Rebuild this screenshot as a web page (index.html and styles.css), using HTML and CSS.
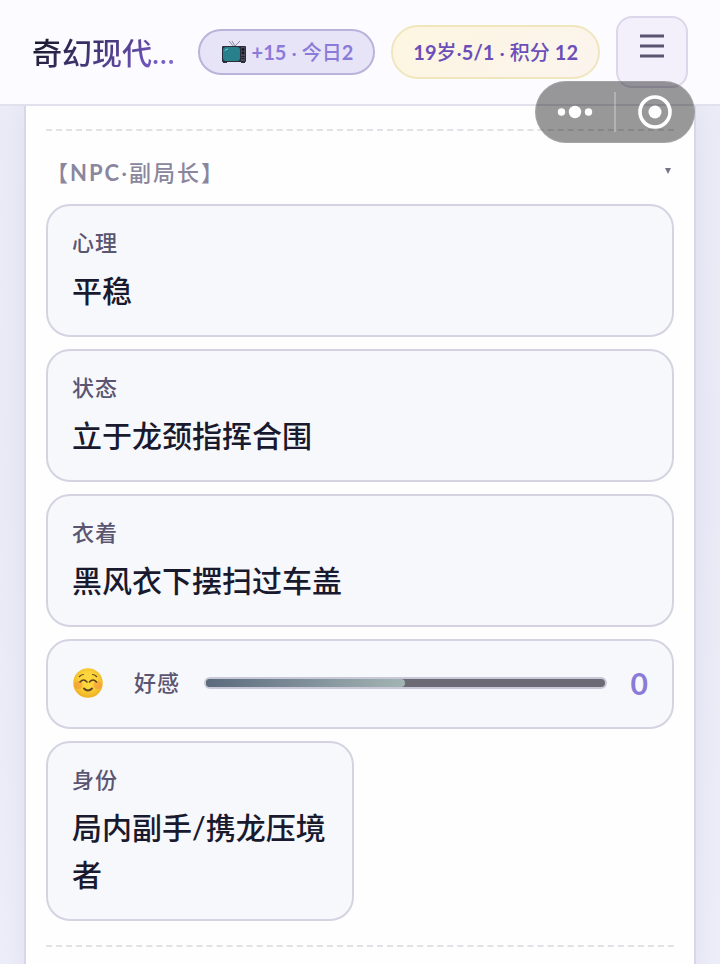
FILE: index.html
```html
<!DOCTYPE html>
<html lang="zh-CN">
<head>
  <meta charset="UTF-8" />
  <meta name="viewport" content="width=device-width, initial-scale=1.0"/>
  <title>奇幻现代</title>
  <link rel="stylesheet" href="styles.css">
</head>
<body>

  <header class="topbar">
    <h1 class="topbar-title">奇幻现代…</h1>
    <button class="pill pill-ad" type="button">
      <svg class="tv" viewBox="0 0 26 24" aria-hidden="true">
        <path d="M8 1l5 6 6-6M11 1l3 5" fill="none" stroke="#8d8a9c" stroke-width="1"/>
        <path d="M2 22h4v1H2zM20 22h4v1h-4z" fill="#302c3c"/>
        <rect x="1" y="6" width="24" height="16" rx="1" fill="#292d3a"/>
        <rect x="2" y="7" width="17" height="14" rx="3" fill="#28808c"/>
        <path d="M4 11q0-2 3-2" fill="none" stroke="#7fc3c9" stroke-width="1"/>
        <rect x="20" y="7" width="4" height="14" fill="#4b4b58"/>
        <circle cx="22" cy="9.500" r="1.400" fill="#171923"/>
        <circle cx="22" cy="13" r="1.400" fill="#171923"/>
        <path d="M20.500 16.500h3M20.500 18.500h3" stroke="#1c1f2a"/>
      </svg>
      <span><b>+15</b> · 今日<b>2</b></span>
    </button>
    <div class="pill pill-score"><span><b>19</b>岁·<b>5/1</b> · 积分 <b>12</b></span></div>
    <button class="menu-btn" type="button" aria-label="菜单">
      <svg viewBox="0 0 24 24" aria-hidden="true">
        <path d="M0 2h24M0 12h24M0 22h24" stroke="#5a5470" stroke-width="2.800"/>
      </svg>
    </button>
  </header>

  <div class="capsule">
    <button type="button" aria-label="更多">
      <svg width="36" height="14" viewBox="0 0 36 14" fill="#fff" aria-hidden="true">
        <circle cx="4.500" cy="7" r="3.700"/>
        <circle cx="18" cy="7" r="6.200"/>
        <circle cx="31.500" cy="7" r="3.700"/>
      </svg>
    </button>
    <span class="capsule-line"></span>
    <button type="button" aria-label="关闭">
      <svg width="34" height="34" viewBox="0 0 34 34" aria-hidden="true">
        <circle cx="17" cy="17" r="15" fill="none" stroke="#fff" stroke-width="3.600"/>
        <circle cx="17" cy="17" r="6.500" fill="#fff"/>
      </svg>
    </button>
  </div>

  <main class="panel">
    <section class="group">
      <h2 class="group-heading">
        <button class="group-toggle" type="button" aria-expanded="true">
          <span>【<b>NPC</b>·副局长】</span>
          <svg class="arrow" viewBox="0 0 6 6" aria-hidden="true"><path d="M0 0h6L3 6z" fill="#77738a"/></svg>
        </button>
      </h2>

      <div class="cards">
        <div class="card wide">
          <div class="label">心理</div>
          <div class="value">平稳</div>
        </div>
        <div class="card wide">
          <div class="label">状态</div>
          <div class="value">立于龙颈指挥合围</div>
        </div>
        <div class="card wide">
          <div class="label">衣着</div>
          <div class="value">黑风衣下摆扫过车盖</div>
        </div>
        <div class="card wide favor">
          <svg class="face" viewBox="0 0 32 32" aria-hidden="true">
            <defs>
              <radialGradient id="skin" cx="50%" cy="42%" r="55%">
                <stop offset="0.500" stop-color="#fdd53c"/>
                <stop offset="1" stop-color="#f0b326"/>
              </radialGradient>
            </defs>
            <circle cx="16" cy="16" r="14.800" fill="url(#skin)"/>
            <circle cx="6.500" cy="18" r="4" fill="#f58b3c" opacity=".5"/>
            <circle cx="25.500" cy="18" r="4" fill="#f58b3c" opacity=".5"/>
            <g fill="none" stroke="#5b4223" stroke-linecap="round">
              <path d="M8 15q3.500-4 7 0M17.500 15q3.500-4 7 0" stroke-width="1.600"/>
              <path d="M7.500 9.500q1.500-1.800 4-2M20.500 7.500q2.500.2 4 2" stroke-width="1.200"/>
              <path d="M12 21.500q4 4 8 0" stroke-width="1.900"/>
            </g>
          </svg>
          <div class="label" id="favor-label">好感</div>
          <div class="track" role="meter" aria-labelledby="favor-label" aria-valuemin="-100" aria-valuemax="100" aria-valuenow="0">
            <div class="fill" style="width: 50%"></div>
          </div>
          <div class="favor-num">0</div>
        </div>
        <div class="card">
          <div class="label">身份</div>
          <div class="value">局内副手/携龙压境者</div>
        </div>
      </div>
    </section>
    <section class="group"></section>
  </main>

</body>
</html>
```
FILE: styles.css
```css
* {
  box-sizing: border-box;
}

body {
  margin: 0;
  min-height: 100vh;
  display: flex;
  flex-direction: column;
  font-family: Lato, 'Noto Sans CJK SC', sans-serif;
  background: linear-gradient(180deg, #ececf7, #ebebf7 50%, #eeeef9);
  color: #1a1a2e;
}

button {
  font-family: inherit;
  cursor: pointer;
}

b {
  font-weight: 700;
}

.topbar {
  position: sticky;
  top: 0;
  z-index: 10;
  display: flex;
  align-items: center;
  gap: 16px;
  padding: 16px 32px;
  background: #fcfbff;
  border-bottom: 2px solid #e2e0ec;
}

.topbar-title {
  flex: 1;
  min-width: 0;
  margin: 0;
  white-space: nowrap;
  font-size: 30px;
  font-weight: 500;
  line-height: 44px;
  background: linear-gradient(135deg, #1a1a2e 10%, #6b52b8 75%, #8b7fd8);
  -webkit-background-clip: text;
  background-clip: text;
  color: transparent;
}

.pill {
  display: flex;
  align-items: center;
  border: 2px solid;
  border-radius: 32px;
  padding: 0 20px;
  font-size: 20px;
  font-weight: 500;
  line-height: 28px;
  white-space: nowrap;
}

.pill-ad {
  gap: 4px;
  height: 46px;
  background: #e8e4f8;
  border-color: #bbb2dc;
  color: #8b7bd8;
}

.tv {
  width: 28px;
  height: 24px;
}

.pill-score {
  height: 54px;
  background: linear-gradient(135deg, #fdf6e0, #fbf4ee);
  border-color: #f0e6bd;
  color: #6b4fb8;
}

.menu-btn {
  display: flex;
  justify-content: center;
  width: 72px;
  height: 72px;
  padding: 16px 0 0;
  background: #f3f0fc;
  border: 2px solid #dcd7ea;
  border-radius: 16px;
}

.menu-btn svg {
  width: 24px;
  height: 24px;
}

/* floating capsule over the page corner */
.capsule {
  position: fixed;
  top: 81px;
  right: 25px;
  z-index: 20;
  display: flex;
  align-items: center;
  width: 160px;
  height: 62px;
  border: 1px solid rgba(170, 170, 170, 0.6);
  border-radius: 31px;
  background: rgba(0, 0, 0, 0.4);
}

.capsule button {
  flex: 1;
  display: flex;
  align-items: center;
  justify-content: center;
  padding: 0;
  border: none;
  background: none;
}

.capsule-line {
  width: 2px;
  height: 40px;
  background: rgba(255, 255, 255, 0.25);
}

.panel {
  flex: 1;
  margin: 0 24px;
  padding: 23px 20px 0;
  background: #fefefe;
  border: solid #d9d7e6;
  border-width: 0 2px;
  box-shadow: 0 0 28px rgba(120, 100, 180, 0.1);
}

.group {
  border-top: 2px dashed #e2e2e6;
  padding: 16px 0 24px;
}

.group-heading {
  margin: 0;
}

.group-toggle {
  display: flex;
  align-items: center;
  justify-content: space-between;
  width: 100%;
  height: 48px;
  padding: 0 3px 0 0;
  margin-bottom: 9px;
  border: none;
  background: none;
  color: #8a869d;
  font-size: 22px;
  font-weight: 500;
  letter-spacing: 2px;
}

.arrow {
  width: 6px;
  height: 6px;
}

.cards {
  display: grid;
  grid-template-columns: 1fr 1fr;
  gap: 12px;
}

.card {
  padding: 19px 24px 21px;
  background: #f7f8fc;
  border: 2px solid #d5d3e1;
  border-radius: 24px;
}

.wide {
  grid-column: 1 / -1;
}

.label {
  font-size: 22px;
  font-weight: 500;
  line-height: 36px;
  letter-spacing: 1px;
  color: #5a5672;
}

.value {
  margin-top: 6px;
  font-size: 30px;
  font-weight: 500;
  line-height: 47px;
}

.favor {
  display: flex;
  align-items: center;
  gap: 24px;
  height: 90px;
}

.face {
  width: 32px;
  height: 32px;
  margin-right: 6px;
}

.track {
  flex: 1;
  height: 12px;
  overflow: hidden;
  border: 2px solid #c9c8d8;
  border-radius: 6px;
  background: #6c6b75;
}

.fill {
  height: 100%;
  border-radius: 0 4px 4px 0;
  background: linear-gradient(90deg, #5b6a7d, #a3b4b4);
}

.favor-num {
  color: #8b7bd8;
  font-size: 30px;
  font-weight: 700;
}
```
